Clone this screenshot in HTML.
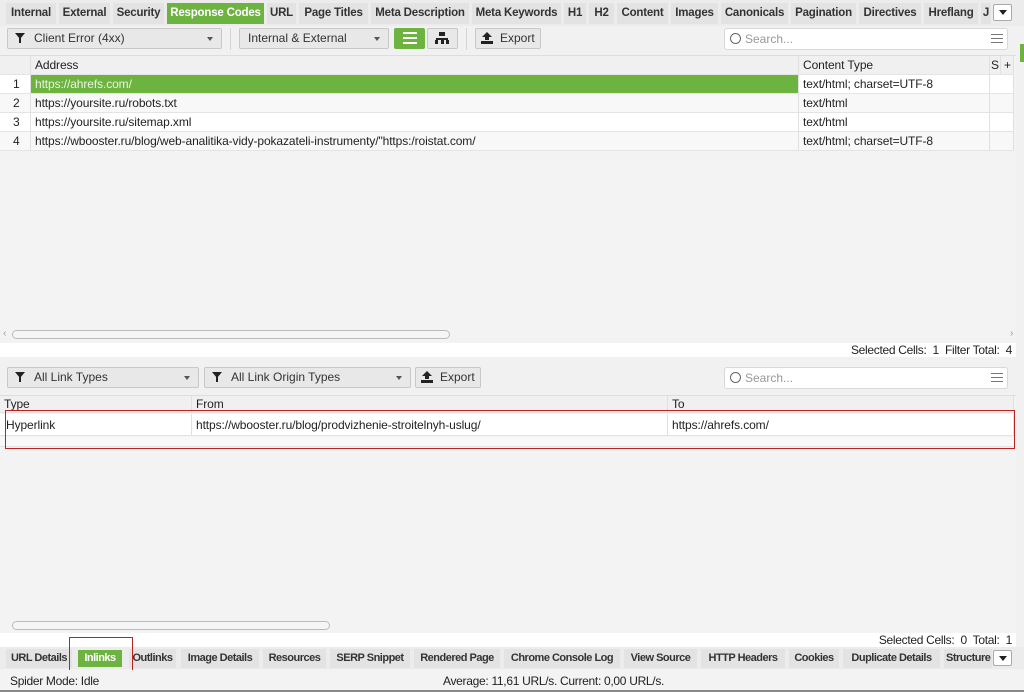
<!DOCTYPE html>
<html><head><meta charset="utf-8"><style>
*{box-sizing:border-box;margin:0;padding:0}
body{width:1024px;height:692px;overflow:hidden;background:#f1f1f1;font-family:"Liberation Sans",sans-serif;font-size:12px;color:#222;position:relative}
.a{position:absolute;white-space:nowrap}
.tab{position:absolute;top:3px;height:21px;background:#e3e3e3;font-weight:bold;font-size:11.5px;letter-spacing:-0.2px;line-height:21px;text-align:center;color:#333;white-space:nowrap;overflow:hidden}
.tab.g{background:#6cb33f;color:#fff}
.btn{position:absolute;height:21px;border:1px solid #c8c8c8;border-radius:2px;background:#e8e8e8;line-height:19px;font-size:12px;color:#333;padding-left:8px;white-space:nowrap}
.dd::after{content:"";position:absolute;right:8px;top:8px;border-left:3.5px solid transparent;border-right:3.5px solid transparent;border-top:4px solid #555}
.row{position:absolute;left:0;width:1014px;height:19px;line-height:19px;border-bottom:1px solid #e4e4e4;background:#fff}
.c{position:absolute;top:0;height:100%;border-right:1px solid #e0e0e0;padding-left:4px;white-space:nowrap;overflow:hidden;letter-spacing:-0.1px}
.btab{position:absolute;top:649px;height:19px;background:#e3e3e3;font-weight:bold;font-size:11px;letter-spacing:-0.5px;line-height:19px;text-align:center;color:#333;white-space:nowrap;overflow:hidden}
.search{position:absolute;background:#fff;border:1px solid #d8d8d8;border-radius:3px;height:22px;color:#999;line-height:20px;padding-left:20px}
.search::before{content:"";position:absolute;left:5px;top:4px;width:9px;height:9px;border:1.5px solid #666;border-radius:50%}
</style></head><body>
<div class="a" style="left:0;top:0;width:1024px;height:26px;background:#ececec"></div>
<div class="tab" style="left:6px;width:50px">Internal</div>
<div class="tab" style="left:59px;width:51px">External</div>
<div class="tab" style="left:113px;width:51px">Security</div>
<div class="tab g" style="left:167px;width:97px">Response Codes</div>
<div class="tab" style="left:267px;width:29px">URL</div>
<div class="tab" style="left:299px;width:69px">Page Titles</div>
<div class="tab" style="left:371px;width:98px">Meta Description</div>
<div class="tab" style="left:472px;width:89px">Meta Keywords</div>
<div class="tab" style="left:564px;width:22px">H1</div>
<div class="tab" style="left:589px;width:25px">H2</div>
<div class="tab" style="left:617px;width:51px">Content</div>
<div class="tab" style="left:671px;width:47px">Images</div>
<div class="tab" style="left:721px;width:67px">Canonicals</div>
<div class="tab" style="left:791px;width:65px">Pagination</div>
<div class="tab" style="left:859px;width:62px">Directives</div>
<div class="tab" style="left:924px;width:54px">Hreflang</div>
<div class="tab" style="left:981px;width:10px">J</div>
<div class="a" style="left:993px;top:4px;width:19px;height:17px;background:#fff;border:1px solid #aaa;border-radius:2px"><div class="a" style="left:5px;top:5px;border-left:4px solid transparent;border-right:4px solid transparent;border-top:5px solid #222"></div></div>
<div class="btn dd" style="left:7px;top:28px;width:215px;padding-left:26px">Client Error (4xx)</div>
<div class="a" style="left:15px;top:33px;border-left:5px solid transparent;border-right:5px solid transparent;border-top:6px solid #222"></div><div class="a" style="left:19px;top:37px;width:2px;height:6px;background:#222"></div>
<div class="a" style="left:230px;top:28px;width:1px;height:22px;background:#d5d5d5"></div>
<div class="btn dd" style="left:239px;top:28px;width:150px">Internal &amp; External</div>
<div class="a" style="left:394px;top:28px;width:31px;height:21px;background:#6cb33f;border-radius:2px"></div>
<div class="a" style="left:403px;top:32px;width:14px;height:12px;border-top:2px solid #fff;border-bottom:2px solid #fff"></div><div class="a" style="left:403px;top:37px;width:14px;height:2px;background:#fff"></div>
<div class="btn" style="left:427px;top:28px;width:31px"></div>
<div class="a" style="left:439px;top:32px;width:6px;height:4px;background:#222"></div><div class="a" style="left:436px;top:38px;width:12px;height:2px;background:#222"></div><div class="a" style="left:435px;top:40px;width:14px;height:4px;border-left:3px solid #222;border-right:3px solid #222"></div><div class="a" style="left:441px;top:40px;width:3px;height:4px;background:#222"></div>
<div class="a" style="left:466px;top:28px;width:1px;height:22px;background:#d5d5d5"></div>
<div class="btn" style="left:475px;top:28px;width:66px;padding-left:24px">Export</div>
<div class="a" style="left:482px;top:32px;border-left:5px solid transparent;border-right:5px solid transparent;border-bottom:5px solid #222"></div><div class="a" style="left:485px;top:36px;width:4px;height:4px;background:#222"></div><div class="a" style="left:481px;top:41px;width:12px;height:3px;background:#222"></div>
<div class="search" style="left:724px;top:28px;width:284px">Search...</div>
<div class="a" style="left:991px;top:34px;width:12px;height:9px;border-top:1px solid #777;border-bottom:1px solid #777"></div><div class="a" style="left:991px;top:38px;width:12px;height:1px;background:#777"></div>
<div class="a" style="left:1020px;top:44px;width:4px;height:18px;background:#6cb33f"></div>
<div class="a" style="left:0;top:55px;width:1016px;height:288px;background:#f3f3f3;border-top:1px solid #ddd"></div>
<div class="row" style="top:56px;height:19px;background:#f0f0f0"><div class="c" style="left:0;width:31px"></div><div class="c" style="left:31px;width:768px">Address</div><div class="c" style="left:799px;width:191px">Content Type</div><div class="c" style="left:990px;width:11px;padding-left:1px">S</div><div class="c" style="left:1001px;width:13px;padding-left:3px">+</div></div>
<div class="row" style="top:75px"><div class="c" style="left:0;width:31px;padding-left:13px">1</div><div class="c" style="left:31px;width:768px;background:#6cb33f;color:#eaf5e0">https://ahrefs.com/</div><div class="c" style="left:799px;width:191px">text/html; charset=UTF-8</div><div class="c" style="left:990px;width:24px"></div></div>
<div class="row" style="top:94px;background:#f8f8f8"><div class="c" style="left:0;width:31px;padding-left:13px">2</div><div class="c" style="left:31px;width:768px">https://yoursite.ru/robots.txt</div><div class="c" style="left:799px;width:191px">text/html</div><div class="c" style="left:990px;width:24px"></div></div>
<div class="row" style="top:113px"><div class="c" style="left:0;width:31px;padding-left:13px">3</div><div class="c" style="left:31px;width:768px">https://yoursite.ru/sitemap.xml</div><div class="c" style="left:799px;width:191px">text/html</div><div class="c" style="left:990px;width:24px"></div></div>
<div class="row" style="top:132px;background:#f8f8f8"><div class="c" style="left:0;width:31px;padding-left:13px">4</div><div class="c" style="left:31px;width:768px">https://wbooster.ru/blog/web-analitika-vidy-pokazateli-instrumenty/"https:/roistat.com/</div><div class="c" style="left:799px;width:191px">text/html; charset=UTF-8</div><div class="c" style="left:990px;width:24px"></div></div>
<div class="a" style="left:12px;top:330px;width:438px;height:9px;border:1px solid #bbb;border-radius:5px;background:#f5f5f5"></div>
<div class="a" style="left:3px;top:328px;color:#999;font-size:10px">‹</div><div class="a" style="left:1010px;top:328px;color:#999;font-size:10px">›</div>
<div class="a" style="left:0;top:343px;width:1016px;height:14px;background:#fff"></div>
<div class="a" style="right:12px;top:343px;font-size:12px;letter-spacing:-0.3px">Selected Cells:&nbsp; 1&nbsp; Filter Total:&nbsp; 4</div>
<div class="btn dd" style="left:7px;top:367px;width:192px;padding-left:26px">All Link Types</div>
<div class="a" style="left:15px;top:372px;border-left:5px solid transparent;border-right:5px solid transparent;border-top:6px solid #222"></div><div class="a" style="left:19px;top:376px;width:2px;height:6px;background:#222"></div>
<div class="btn dd" style="left:204px;top:367px;width:207px;padding-left:26px">All Link Origin Types</div>
<div class="a" style="left:212px;top:372px;border-left:5px solid transparent;border-right:5px solid transparent;border-top:6px solid #222"></div><div class="a" style="left:216px;top:376px;width:2px;height:6px;background:#222"></div>
<div class="btn" style="left:415px;top:367px;width:66px;padding-left:24px">Export</div>
<div class="a" style="left:422px;top:371px;border-left:5px solid transparent;border-right:5px solid transparent;border-bottom:5px solid #222"></div><div class="a" style="left:425px;top:375px;width:4px;height:4px;background:#222"></div><div class="a" style="left:421px;top:380px;width:12px;height:3px;background:#222"></div>
<div class="search" style="left:724px;top:367px;width:284px">Search...</div>
<div class="a" style="left:991px;top:373px;width:12px;height:9px;border-top:1px solid #777;border-bottom:1px solid #777"></div><div class="a" style="left:991px;top:377px;width:12px;height:1px;background:#777"></div>
<div class="a" style="left:0;top:395px;width:1016px;height:240px;background:#f3f3f3;border-top:1px solid #ddd"></div>
<div class="row" style="top:396px;height:17px;line-height:17px;background:#f0f0f0"><div class="c" style="left:0;width:192px">Type</div><div class="c" style="left:192px;width:476px">From</div><div class="c" style="left:668px;width:346px">To</div></div>
<div class="row" style="top:414px;height:22px;line-height:22px"><div class="c" style="left:0;width:192px;padding-left:6px">Hyperlink</div><div class="c" style="left:192px;width:476px">https://wbooster.ru/blog/prodvizhenie-stroitelnyh-uslug/</div><div class="c" style="left:668px;width:346px">https://ahrefs.com/</div></div>
<div class="row" style="top:437px;height:10px;background:#f8f8f8"></div>
<div class="a" style="left:5px;top:410px;width:1010px;height:39px;border:1.5px solid #b22"></div>
<div class="a" style="left:12px;top:621px;width:318px;height:9px;border:1px solid #bbb;border-radius:5px;background:#f5f5f5"></div>
<div class="a" style="left:0;top:633px;width:1016px;height:14px;background:#fff"></div>
<div class="a" style="right:12px;top:633px;font-size:12px;letter-spacing:-0.3px">Selected Cells:&nbsp; 0&nbsp; Total:&nbsp; 1</div>
<div class="a" style="left:0;top:647px;width:1024px;height:22px;background:#ececec"></div>
<div class="btab" style="left:6px;width:66px">URL Details</div>
<div class="btab" style="left:78px;width:44px;background:#6cb33f;color:#fff;top:650px;height:17px;line-height:17px">Inlinks</div>
<div class="btab" style="left:129px;width:47px">Outlinks</div>
<div class="btab" style="left:181px;width:78px">Image Details</div>
<div class="btab" style="left:263px;width:63px">Resources</div>
<div class="btab" style="left:330px;width:80px">SERP Snippet</div>
<div class="btab" style="left:414px;width:86px">Rendered Page</div>
<div class="btab" style="left:504px;width:116px">Chrome Console Log</div>
<div class="btab" style="left:624px;width:73px">View Source</div>
<div class="btab" style="left:701px;width:84px">HTTP Headers</div>
<div class="btab" style="left:789px;width:50px">Cookies</div>
<div class="btab" style="left:843px;width:97px">Duplicate Details</div>
<div class="btab" style="left:944px;width:48px;text-align:left;padding-left:2px">Structure</div>
<div class="a" style="left:993px;top:650px;width:19px;height:16px;background:#fff;border:1px solid #aaa;border-radius:2px"><div class="a" style="left:5px;top:5px;border-left:4px solid transparent;border-right:4px solid transparent;border-top:5px solid #222"></div></div>
<div class="a" style="left:69px;top:637px;width:64px;height:34px;border:1.5px solid #b22"></div>
<div class="a" style="left:0;top:670px;width:1024px;height:20px;background:#f3f3f3"></div>
<div class="a" style="left:10px;top:674px;letter-spacing:-0.3px">Spider Mode: Idle</div>
<div class="a" style="left:443px;top:674px;letter-spacing:-0.3px">Average: 11,61 URL/s. Current: 0,00 URL/s.</div>
<div class="a" style="left:0;top:690px;width:1024px;height:2px;background:#888"></div>
</body></html>
